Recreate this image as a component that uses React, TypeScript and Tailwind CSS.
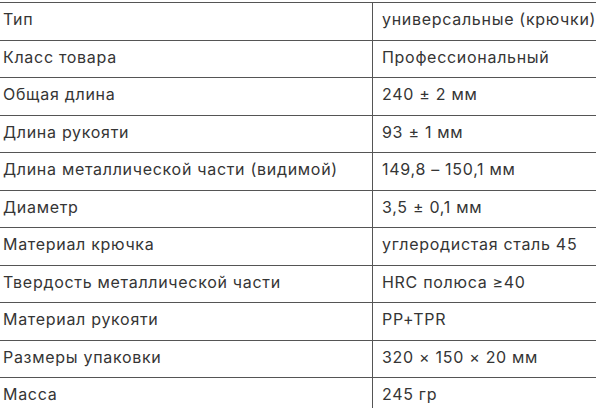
import React from "react";

const rows: [string, string][] = [
  ["Тип", "универсальные (крючки)"],
  ["Класс товара", "Профессиональный"],
  ["Общая длина", "240 ± 2 мм"],
  ["Длина рукояти", "93 ± 1 мм"],
  ["Длина металлической части (видимой)", "149,8 – 150,1 мм"],
  ["Диаметр", "3,5 ± 0,1 мм"],
  ["Материал крючка", "углеродистая сталь 45"],
  ["Твердость металлической части", "HRC полюса ≥40"],
  ["Материал рукояти", "PP+TPR"],
  ["Размеры упаковки", "320 × 150 × 20 мм"],
  ["Масса", "245 гр"],
];

export default function App() {
  return (
    <div
      className="w-[600px] h-[410px] overflow-hidden bg-white pt-[2px] text-[#353535]"
      style={{ fontFamily: "Inter, 'Noto Sans', sans-serif" }}
    >
      <div className="w-[596px]">
        {rows.map(([k, v], i) => (
          <div
            key={i}
            className={`grid grid-cols-[372px_1fr] border-t-[1.5px] border-[#555] ${
              i === rows.length - 1 ? "h-[31px]" : "h-[37.5px]"
            }`}
          >
            <div className="pl-[3px] pt-[7px] text-[16px] leading-[18px] tracking-[0.7px] whitespace-nowrap">
              {k}
            </div>
            <div className="border-l-[1.5px] border-[#555] pl-[9px] pt-[7px] text-[16px] leading-[18px] tracking-[0.7px] whitespace-nowrap">
              {v}
            </div>
          </div>
        ))}
      </div>
    </div>
  );
}
